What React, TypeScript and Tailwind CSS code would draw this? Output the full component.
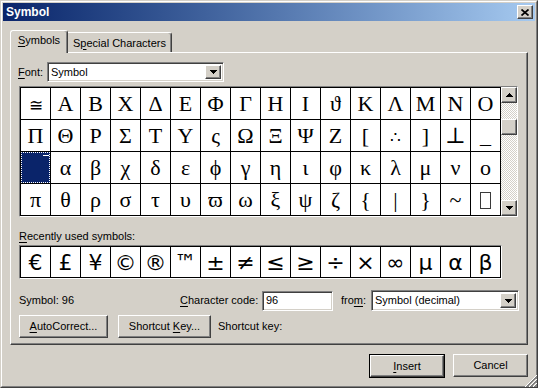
import React from "react";

const raised =
  "border border-t-white border-l-white border-r-[#404040] border-b-[#404040] shadow-[inset_-1px_-1px_0_#808080] bg-[#d4d0c8]";
const sunken =
  "border border-t-[#808080] border-l-[#808080] border-r-white border-b-white shadow-[inset_1px_1px_0_#404040,inset_-1px_-1px_0_#d4d0c8] bg-white";

function Tri({ up = false }: { up?: boolean }) {
  return (
    <svg width="7" height="4" viewBox="0 0 7 4" shapeRendering="crispEdges">
      <polygon points={up ? "0,4 7,4 3.5,0" : "0,0 7,0 3.5,4"} fill="#000" />
    </svg>
  );
}

function DropBtn() {
  return (
    <div className={`${raised} w-[16px] h-full flex items-center justify-center shrink-0`}>
      <Tri />
    </div>
  );
}

function U({ children }: { children: React.ReactNode }) {
  return <span className="underline underline-offset-[2px]">{children}</span>;
}

const rows = [
  "≅ΑΒΧΔΕΦΓΗΙϑΚΛΜΝΟ",
  "ΠΘΡΣΤΥςΩΞΨΖ[∴]⊥_",
  " αβχδεϕγηιφκλμνο",
  "πθρστυϖωξψζ{|}~□",
];

const recent = ["€", "£", "¥", "©", "®", "™", "±", "≠", "≤", "≥", "÷", "×", "∞", "µ", "α", "β"];

export default function App() {
  return (
    <div className="w-[538px] h-[388px] bg-[#d4d0c8] border border-t-[#d4d0c8] border-l-[#d4d0c8] border-r-[#404040] border-b-[#404040] text-[11px] text-black font-['Liberation_Sans',Arial,sans-serif] leading-none relative select-none">
      <div className="h-full border border-t-white border-l-white border-r-[#808080] border-b-[#808080] p-px flex flex-col">
        {/* Title bar */}
        <div className="h-[18px] bg-linear-to-r from-[#0a246a] to-[#a6caf0] flex items-center pl-[3px] pr-[2px] shrink-0">
          <span className="text-white font-bold text-[12px]">Symbol</span>
          <div className={`${raised} ml-auto w-[16px] h-[14px] flex items-center justify-center`}>
            <svg width="8" height="7" viewBox="0 0 8 7">
              <path d="M0.5 0.5 L7.5 6.5 M7.5 0.5 L0.5 6.5" stroke="#000" strokeWidth="1.7" />
            </svg>
          </div>
        </div>

        <div className="px-[7px] flex flex-col">
          {/* Tabs */}
          <div className="mt-[9px] h-[22px] flex items-end relative z-10">
            <div className="h-[23px] w-[58px] -mb-px bg-[#d4d0c8] border-t border-l border-t-white border-l-white border-r border-r-[#404040] shadow-[inset_-1px_0_0_#808080] rounded-t-[3px] flex items-center justify-center pb-[3px]">
              <span>
                <U>S</U>ymbols
              </span>
            </div>
            <div className="h-[20px] w-[104px] bg-[#d4d0c8] border-t border-t-white border-r border-r-[#404040] shadow-[inset_-1px_0_0_#808080] rounded-tr-[3px] flex items-center justify-center pt-[1px]">
              <span>
                S<U>p</U>ecial Characters
              </span>
            </div>
          </div>

          {/* Panel */}
          <div className="h-[293px] border border-t-white border-l-white border-r-[#404040] border-b-[#404040] shadow-[inset_-1px_-1px_0_#808080] pl-[8px] pt-[9px] flex flex-col">
            {/* Font row */}
            <div className="flex items-center h-[20px]">
              <span className="w-[29px] -ml-px">
                <U>F</U>ont:
              </span>
              <div className={`${sunken} w-[177px] h-[20px] flex items-center p-[2px]`}>
                <span className="flex-1 pl-[1px]">Symbol</span>
                <DropBtn />
              </div>
            </div>

            {/* Symbol grid */}
            <div className="mt-[4px] flex w-[499px] border border-t-[#808080] border-l-[#808080] border-r-white border-b-white">
              <div className="grid grid-cols-[repeat(16,30px)] border-l border-t border-black bg-white font-['Liberation_Serif','DejaVu_Serif',serif] text-[22px]">
                {rows.map((r, ri) =>
                  Array.from(r).map((ch, ci) => {
                    if (ri === 2 && ci === 0) {
                      return (
                        <div key={`${ri}-${ci}`} className="w-[30px] h-[32px] border-r border-b border-black">
                          <div className="w-full h-full bg-[#0a246a] border border-dotted border-white flex justify-end">
                            <div className="w-[6px] h-px bg-white mt-[2px]" />
                          </div>
                        </div>
                      );
                    }
                    if (ch === "□") {
                      return (
                        <div key={`${ri}-${ci}`} className="w-[30px] h-[32px] border-r border-b border-black flex justify-center pt-[8px]">
                          <div className="w-[11px] h-[17px] border border-[#3a3a3a]" />
                        </div>
                      );
                    }
                    if (ch === "≅" || ch === "∴") {
                      return (
                        <div
                          key={`${ri}-${ci}`}
                          className="w-[30px] h-[32px] border-r border-b border-black flex justify-center pt-[9px] leading-[18px] text-[17px]"
                        >
                          {ch}
                        </div>
                      );
                    }
                    return (
                      <div
                        key={`${ri}-${ci}`}
                        className="w-[30px] h-[32px] border-r border-b border-black flex justify-center pt-[5px] leading-[22px]"
                      >
                        {ch}
                      </div>
                    );
                  })
                )}
              </div>
              {/* Scrollbar */}
              <div className="w-[16px] h-[129px] flex flex-col">
                <div className={`${raised} h-[16px] flex items-center justify-center`}>
                  <Tri up />
                </div>
                <div className="flex-1 bg-[image:repeating-conic-gradient(#ffffff_0%_25%,#d4d0c8_0%_50%)] bg-[length:2px_2px]">
                  <div className={`${raised} h-[16px] mt-[16px]`} />
                </div>
                <div className={`${raised} h-[16px] flex items-center justify-center`}>
                  <Tri />
                </div>
              </div>
            </div>

            {/* Recently used */}
            <div className="mt-[13px] leading-[13px]">
              <U>R</U>ecently used symbols:
            </div>
            <div className="mt-[2px] w-[483px] border border-t-[#808080] border-l-[#808080] border-r-white border-b-white">
              <div className="flex border-l border-t border-black bg-white font-['DejaVu_Sans',sans-serif] text-[22px]">
                {recent.map((ch, i) => (
                  <div
                    key={i}
                    className="w-[30px] h-[31px] border-r border-b border-black flex justify-center pt-[5px] leading-[22px]"
                  >
                    {ch}
                  </div>
                ))}
              </div>
            </div>

            {/* Symbol / char code row */}
            <div className="mt-[11px] flex items-center h-[21px]">
              <span className="w-[161px]">Symbol: 96</span>
              <span className="w-[82px]">
                <U>C</U>haracter code:
              </span>
              <div className={`${sunken} w-[71px] h-[20px] flex items-center pl-[3px]`}>96</div>
              <span className="ml-[8px] w-[30px]">
                fro<U>m</U>:
              </span>
              <div className={`${sunken} w-[148px] h-[21px] flex items-center p-[2px]`}>
                <span className="flex-1 pl-[1px]">Symbol (decimal)</span>
                <DropBtn />
              </div>
            </div>

            {/* Buttons row */}
            <div className="mt-[4px] flex items-center">
              <div className={`${raised} w-[89px] h-[23px] flex items-center justify-center`}>
                <span>
                  <U>A</U>utoCorrect...
                </span>
              </div>
              <div className={`${raised} ml-[10px] w-[93px] h-[23px] flex items-center justify-center`}>
                <span>
                  Shortcut <U>K</U>ey...
                </span>
              </div>
              <span className="ml-[7px]">Shortcut key:</span>
            </div>
          </div>

          {/* Bottom buttons */}
          <div className="mt-[9px] flex justify-end items-start gap-[8px]">
            <div className="border border-black">
              <div className={`${raised} w-[74px] h-[22px] flex items-center justify-center`}>
                <span>
                  <U>I</U>nsert
                </span>
              </div>
            </div>
            <div className={`${raised} w-[75px] h-[23px] flex items-center justify-center`}>
              Cancel
            </div>
          </div>
        </div>
      </div>

      {/* size grip */}
      <svg className="absolute right-0 bottom-0" width="12" height="12" viewBox="0 0 12 12" shapeRendering="crispEdges">
        {[0, 4, 8].map((d) => (
          <g key={d}>
            <line x1={12} y1={d} x2={d} y2={12} stroke="#ffffff" strokeWidth="1" />
            <line x1={12} y1={d + 1} x2={d + 1} y2={12} stroke="#808080" strokeWidth="1" />
            <line x1={12} y1={d + 2} x2={d + 2} y2={12} stroke="#808080" strokeWidth="1" />
          </g>
        ))}
      </svg>
    </div>
  );
}
